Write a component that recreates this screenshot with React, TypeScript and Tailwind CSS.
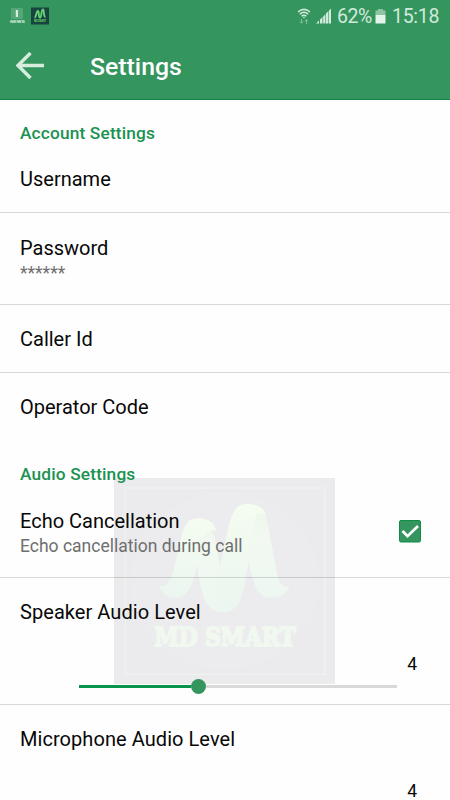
import React from 'react';

const Watermark = () => (
    <svg className="absolute left-[114px] top-[478px] h-[206px] w-[221px]" viewBox="27 39 664 618" preserveAspectRatio="none">
        <defs>
            <linearGradient id="ribbon" x1="0" y1="0" x2="0" y2="1">
                <stop offset="0" stopColor="#f5fcf0" />
                <stop offset="1" stopColor="#ebf6f0" />
            </linearGradient>
            <linearGradient id="fold" x1="0" y1="0" x2="0" y2="1">
                <stop offset="0" stopColor="#edf5ec" />
                <stop offset="0.3" stopColor="#f1f9f1" />
                <stop offset="1" stopColor="#edf7f1" />
            </linearGradient>
        </defs>
        <rect x="27" y="39" width="664" height="618" fill="#ebebed" />
        <ellipse cx="360" cy="348" rx="283" ry="265" fill="#ececee" />
        <rect x="61" y="69" width="599" height="559" fill="none" stroke="#edf3ef" strokeWidth="4" />
        <path d="M303 176 C330 195 330 220 345 300 L430 285 C418 370 410 441 358 441 C300 441 290 395 275 290 Z" fill="url(#fold)" />
        <path d="M163 363 C200 368 205 320 225 235 C235 185 245 160 278 160 C312 160 331 175 333 198 C305 188 291 215 278 290 C266 370 242 400 208 399 C185 398 168 382 163 363 Z" fill="url(#ribbon)" />
        <path d="M330 350 C348 315 358 235 374 175 C386 132 398 117 427 117 C460 117 482 132 484 155 C450 145 445 200 431 290 C416 375 412 438 358 441 C335 438 325 390 330 350 Z" fill="url(#ribbon)" />
        <path d="M455 144 C475 145 483 150 486 163 C500 230 508 285 518 330 C526 362 535 369 554 364 C547 386 526 399 500 399 C460 399 446 362 431 290 C440 230 445 190 455 144 Z" fill="url(#fold)" />
        <text x="149" y="543" textLength="424" lengthAdjust="spacingAndGlyphs" className="font-['DejaVu_Serif',serif] font-bold" fontSize="76" fill="#f1f8ef" stroke="#f1f8ef" strokeWidth="6">MD SMART</text>
    </svg>
);

const StatusBar = () => (
    <div className="flex h-8 items-center justify-between pl-[9px] pr-3 text-[#d2eadb]">
        <div className="flex items-center gap-[5px]">
            <svg className="h-[18px] w-[17px] overflow-visible" viewBox="0 0 17 18">
                <rect x="2" y="1" width="12" height="11" fill="#55a777" />
                <rect x="6.8" y="3" width="2.2" height="7" fill="#d5ecde" />
                <text x="1" y="16" fontSize="4" textLength="15" lengthAdjust="spacingAndGlyphs" fill="#c5e3d1" className="font-['Roboto',sans-serif] font-black">NEWS</text>
            </svg>
            <svg className="h-[18px] w-[18px] overflow-visible" viewBox="0 0 18 18">
                <rect y="0.5" width="18" height="17" fill="#174440" />
                <path d="M3.5 10.5 C5.5 10.5 5 4 7 4 C8.5 4 7 10.5 9 10.5 C11 10.5 9.8 2.5 12 2.5 C13.5 2.5 12 10 14.5 10" fill="none" stroke="#65cf72" strokeWidth="1.9" />
                <text x="3" y="15" fontSize="3.4" textLength="12" lengthAdjust="spacingAndGlyphs" fill="#68d75d" className="font-['Roboto',sans-serif] font-bold">MD SMART</text>
            </svg>
        </div>
        <div className="flex items-center">
            <svg className="mr-[5px] h-[17px] w-[14px]" viewBox="0 0 14 17" fill="none" stroke="currentColor" strokeWidth="1.5">
                <path d="M1 4 Q7 -1.2 13 4M2.8 6.2 Q7 2.4 11.2 6.2M4.6 8.3 Q7 6.2 9.4 8.3" />
                <circle cx="7" cy="9.5" r="0.8" fill="currentColor" stroke="none" />
                <path d="M4.5 11v4M3 13.5l1.5 1.8L6 13.5M9.5 16v-4M8 13.3l1.5-1.8L11 13.3" stroke="#83bf9b" strokeWidth="1" />
            </svg>
            <svg className="mr-[6px] h-4 w-[15px]" viewBox="0 0 15 16" fill="currentColor">
                <path d="M0 15.5 L3 12.5V15.5ZM4 11.5 6.5 9V15.5H4ZM7.2 8.5 9.4 6.3V15.5H7.2ZM10 5.5 12.2 3.3V15.5H10ZM12.8 2.7 15 0.5V15.5H12.8Z" />
            </svg>
            <span className="w-[38px] whitespace-nowrap pt-px text-[19.5px] leading-6 tracking-[-0.5px]">62%</span>
            <svg className="mr-[6px] h-4 w-[11px]" viewBox="0 0 11 16">
                <path d="M3 1h5v1.5H3zM0.5 2.5h10V7h-10z" fill="#8dc5a3" />
                <path d="M0.5 7h10v8.5h-10z" fill="#e3f4e9" />
            </svg>
            <span className="w-[46px] whitespace-nowrap pt-px text-[19.5px] leading-6 tracking-[-0.3px]">15:18</span>
        </div>
    </div>
);

const Category = ({ title }: { title: string }) => (
    <h2 className="h-[45px] px-5 pt-[21px] text-[17.3px] font-medium leading-6 tracking-[0.16px] text-[#1b9251]">{title}</h2>
);

type RowProps = {
    title: string;
    summary?: string;
    border?: boolean;
    children?: React.ReactNode;
};

const Row = ({ title, summary, border = true, children }: RowProps) => (
    <div className={`flex items-center justify-between border-b pl-5 pr-[29px] ${summary ? 'h-[92px]' : 'h-[68px]'} ${border ? 'border-black/15' : 'border-transparent'}`}>
        <div className={summary ? 'pt-[3px]' : 'pt-px'}>
            <p className="text-[20px] leading-6 text-[#080808]">{title}</p>
            {summary && <p className="pt-px text-[17.5px] leading-6 text-[#6f6f6f]">{summary}</p>}
        </div>
        {children}
    </div>
);

const SliderRow = ({ title, value }: { title: string; value: number }) => (
    <div className="h-[127px] border-b border-black/15 px-5 pt-[22px]">
        <p className="text-[20px] leading-6 tracking-[0.06px] text-[#080808]">{title}</p>
        <p className="mt-[31px] pr-[13px] text-right text-[17.5px] leading-[18px] text-[#080808]">{value}</p>
        <div className="ml-[59px] mt-[6px] flex h-[15px] w-[318px] items-center">
            <div className="h-[3px] w-[112px] bg-[#07944b]" />
            <div className="h-[15px] w-[15px] rounded-full bg-[#34955e]" />
            <div className="h-[3px] flex-1 bg-[#d9d9da]" />
        </div>
    </div>
);

const App = () => {
    return (
        <div className="relative h-[800px] w-[450px] overflow-hidden bg-[#fefefe] font-['Roboto',sans-serif]">
            <Watermark />

            {/* Header */}
            <header className="h-[100px] border-b border-[#16844a] bg-[#34955e]">
                <StatusBar />
                <div className="flex h-[68px] items-center pl-4">
                    <svg className="h-7 w-7 text-[#d5ecde]" viewBox="0 0 28 28" fill="none" stroke="currentColor" strokeWidth="3.4">
                        <path d="M28 13.5H2M14.5 1 2 13.5 14.5 26" />
                    </svg>
                    <h1 className="ml-[46px] pt-[2px] text-[24.8px] font-medium leading-8 text-white">Settings</h1>
                </div>
            </header>

            {/* Preferences */}
            <main className="relative">
                <Category title="Account Settings" />
                <Row title="Username" />
                <Row title="Password" summary="******" />
                <Row title="Caller Id" />
                <Row title="Operator Code" border={false} />

                <Category title="Audio Settings" />
                <Row title="Echo Cancellation" summary="Echo cancellation during call">
                    <svg className="h-[23px] w-[22px]" viewBox="0 0 22 23">
                        <rect x="0.5" y="0.5" width="21" height="21.5" rx="1.5" fill="#34955e" stroke="#0b8d47" />
                        <path d="M3.5 11 8.5 16.2 19 6" fill="none" stroke="#fff" strokeWidth="2.7" />
                    </svg>
                </Row>
                <SliderRow title="Speaker Audio Level" value={4} />
                <SliderRow title="Microphone Audio Level" value={4} />
            </main>
        </div>
    );
};

export default App;
